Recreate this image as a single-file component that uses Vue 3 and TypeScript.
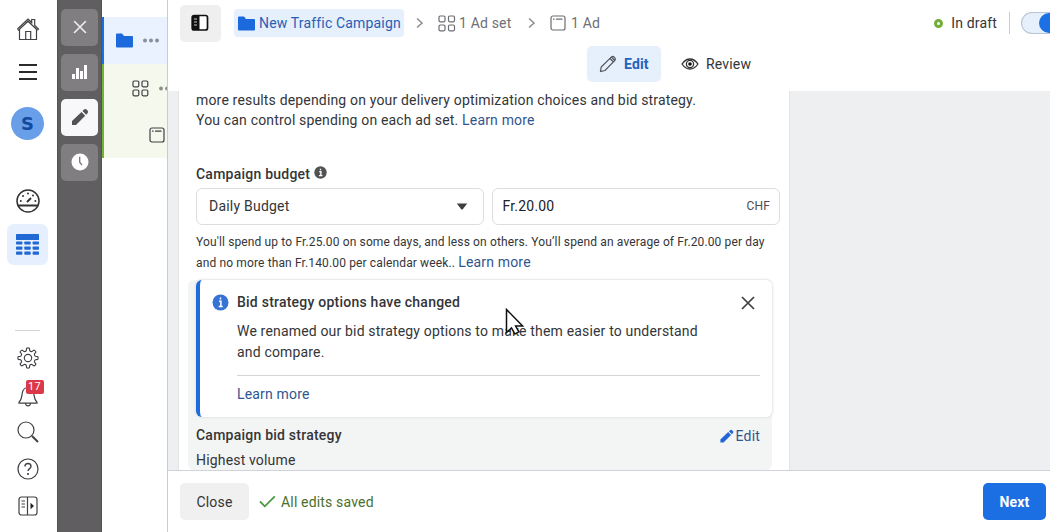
<script setup lang="ts">
interface Tool { name: string; active: boolean }

const tools: Tool[] = [
  { name: 'close', active: false },
  { name: 'chart', active: false },
  { name: 'pencil', active: true },
  { name: 'clock', active: false },
]
const gearTeeth: number[] = [0, 45, 90, 135, 180, 225, 270, 315]
const gearPath: string = gearTeeth
  .map((deg, i) => {
    const at = (r: number, d: number): string => {
      const a = ((deg + d) * Math.PI) / 180
      return `${(12 + r * Math.cos(a)).toFixed(2)} ${(12 + r * Math.sin(a)).toFixed(2)}`
    }
    return `${i ? 'L' : 'M'}${at(8.3, -13)}L${at(10.8, -8)}Q${at(11.4, 0)} ${at(10.8, 8)}L${at(8.3, 13)}Q${at(7.3, 22.5)} ${at(8.3, 32)}`
  })
  .join('') + 'Z'
</script>

<template>
  <div class="app">
    <nav class="rail">
      <div class="slot home">
        <svg width="24" height="24" viewBox="0 0 24 24" class="line"><path d="M1.500 12 12 2l3.700 3.500V2.500h3v6l3.800 3.500-1 1.200M1.500 12l1 1.200L12 4.200l9.500 9M3.500 12.500v10h17v-10M9.700 22.500v-8h5v8" /></svg>
      </div>
      <div class="slot menu">
        <svg width="20" height="18" viewBox="0 0 20 18"><path d="M1 2h18M1 9h18M1 16h18" stroke="#2b2b2b" stroke-width="2" fill="none" /></svg>
      </div>
      <div class="avatar">S</div>
      <div class="slot gauge">
        <svg width="24" height="24" viewBox="0 0 24 24" class="line gauge-icon"><circle cx="12" cy="12" r="11" /><path d="M2 16.500h20" stroke-width="2" /><path d="m11 13 4-4" stroke-width="2" /><g fill="#333" stroke="none"><circle cx="4.800" cy="12" r="1" /><circle cx="7" cy="7" r="1" /><circle cx="12" cy="4.500" r="1" /><circle cx="17" cy="6.500" r="1" /><circle cx="19.400" cy="12" r="1" /></g></svg>
      </div>
      <div class="table-tile">
        <svg width="23" height="21" viewBox="0 0 23 21" fill="#2068d4"><rect width="23" height="6" rx=".6" /><g v-for="row in 3" :key="row"><rect v-for="col in 3" :key="col" :x="(col - 1) * 8.3" :y="2.3 + row * 5.1" width="6.4" height="3.2" rx=".8" /></g></svg>
      </div>
      <div class="rail-divider"></div>
      <div class="slot gear">
        <svg width="22" height="22" viewBox="0 0 24 24" class="line"><path :d="gearPath" /><circle cx="12" cy="12" r="4" /></svg>
      </div>
      <div class="slot bell">
        <svg width="22" height="24" viewBox="0 0 22 24" class="line"><path d="M2 19.200c2.800-2.500 2.600-5 3.200-8.700C5.800 6.500 8 4.500 11 4.500s5.200 2 5.800 6c.6 3.700.4 6.200 3.200 8.700v1H2zM8.500 20.500c.5 3.200 4.500 3.200 5 0" /></svg>
        <span class="badge">17</span>
      </div>
      <div class="slot search">
        <svg width="22" height="22" viewBox="0 0 22 22" class="line"><circle cx="9" cy="9" r="8" /><path d="m15 15 6 6" stroke-width="2" /></svg>
      </div>
      <div class="slot help">
        <svg width="22" height="22" viewBox="0 0 22 22" class="line"><circle cx="11" cy="11" r="10" /><path d="M8 8.500c0-4 6-4 6 0 0 2-3 2.300-3 4.500" stroke-width="1.400" /><circle cx="11" cy="16" r=".5" /></svg>
      </div>
      <div class="slot sidebar">
        <svg width="20" height="20" viewBox="0 0 20 20" class="line"><rect x="1" y="1" width="18" height="18" rx="2.500" /><path d="M9.500 1v18M3.500 5h3.500M3.500 8h3.500M3.500 11h3.500" /><path d="m12.500 6.800 3.500 3.200-3.500 3.200z" fill="#222" stroke="none" /></svg>
      </div>
    </nav>

    <aside class="toolbar">
      <div v-for="tool in tools" :key="tool.name" class="tool" :class="{ active: tool.active }">
        <svg v-if="tool.name === 'close'" width="14" height="14" viewBox="0 0 14 14"><path d="m1.500 1.500 11 11m0-11-11 11" stroke="#eee" stroke-width="1.600" stroke-linecap="round" /></svg>
        <svg v-else-if="tool.name === 'chart'" width="16" height="16" viewBox="0 0 16 16" fill="#fff"><rect x="0" y="10" width="3" height="5" /><rect x="4" y="4" width="3" height="11" /><rect x="8" y="7" width="3" height="8" /><rect x="12" y="1" width="3" height="14" /></svg>
        <svg v-else-if="tool.name === 'pencil'" width="18" height="18" viewBox="0 0 18 18" fill="#545254"><path d="M1 17v-4L10.500 4l3.700 3.700L5 17zM11.500 3l1.500-1.500q1.500-1 2.800.300l.7.700q1.200 1.300.2 2.500l-1.500 1.700z" /></svg>
        <svg v-else width="18" height="18" viewBox="0 0 18 18"><circle cx="9" cy="9" r="8.500" fill="#fff" /><path d="M8.700 3.800v5.400l2.300 3" stroke="#777" stroke-width="1.300" fill="none" /></svg>
      </div>
    </aside>

    <aside class="tree">
      <div class="tree-row campaign">
        <svg width="17" height="15" viewBox="0 0 17 15" fill="#1b69dc"><path d="M0 1.500Q0 .5 1 .5h5l2 2.500h8q1 0 1 1v9.500q0 1-1 1H1q-1 0-1-1z" /></svg>
        <svg width="18" height="5" viewBox="0 0 18 5" fill="#888f9e"><circle cx="3" cy="2.500" r="2" /><circle cx="9" cy="2.500" r="2" /><circle cx="15" cy="2.500" r="2" /></svg>
      </div>
      <div class="tree-group">
        <div class="tree-row adset">
          <svg width="17" height="17" viewBox="0 0 17 17" class="line"><rect x="1" y="1" width="5.800" height="5.800" rx="1.200" /><rect x="10" y="1" width="5.800" height="5.800" rx="1.200" /><rect x="1" y="10" width="5.800" height="5.800" rx="1.200" /><rect x="10" y="10" width="5.800" height="5.800" rx="1.200" /></svg>
          <svg width="18" height="5" viewBox="0 0 18 5" fill="#888f86"><circle cx="3" cy="2.500" r="1.900" /><circle cx="9" cy="2.500" r="1.900" /></svg>
        </div>
        <div class="tree-row ad">
          <svg width="16" height="16" viewBox="0 0 16 16" class="line"><rect x="1" y="1" width="14" height="14" rx="2" /><path d="M3 4.200h1.500M6 4.200h6.500" /></svg>
        </div>
      </div>
    </aside>

    <main class="panel">
      <header class="header">
        <div class="crumbs">
          <button class="collapse">
            <svg width="18" height="18" viewBox="0 0 18 18"><rect x="1.200" y="1.500" width="15.300" height="14.500" rx="2" fill="#fff" stroke="#111" stroke-width="1.700" /><path d="M2 2h6.500v14H2z" fill="#111" /><path d="M3 5h3M3 8h3M3 11h3" stroke="#ccc" /></svg>
          </button>
          <div class="crumb-active">
            <svg width="17" height="15" viewBox="0 0 17 15" fill="#1b69dc"><path d="M0 1.500Q0 .5 1 .5h5l2 2.500h8q1 0 1 1v9.500q0 1-1 1H1q-1 0-1-1z" /></svg>
            <span>New Traffic Campaign</span>
          </div>
          <svg class="chev" width="8" height="12" viewBox="0 0 8 12"><path d="m1 1.500 5 4.500-5 4.500" /></svg>
          <svg width="18" height="17" viewBox="0 0 18 17" class="line soft"><rect x="1" y="1" width="6" height="5.800" rx="1.200" /><rect x="10.500" y="1" width="6" height="5.800" rx="1.200" /><rect x="1" y="10" width="6" height="5.800" rx="1.200" /><rect x="10.500" y="10" width="6" height="5.800" rx="1.200" /></svg>
          <span class="crumb adset-label">1 Ad set</span>
          <svg class="chev second" width="8" height="12" viewBox="0 0 8 12"><path d="m1 1.500 5 4.500-5 4.500" /></svg>
          <svg width="16" height="16" viewBox="0 0 16 16" class="line soft"><rect x="1" y="1" width="14" height="14" rx="2" /><path d="M3 4.200h1.500M6 4.200h6.500" /></svg>
          <span class="crumb ad-label">1 Ad</span>
          <div class="status">
            <i class="dot"></i><span>In draft</span><i class="bar"></i>
            <div class="toggle"><i></i></div>
          </div>
        </div>
        <div class="tabs">
          <button class="tab on">
            <svg width="18" height="18" viewBox="0 0 18 18" class="line pen"><path d="M1.500 16.500 2.200 12 12.500 1.900q1.300-1 2.500.1l.8.800q1.200 1.200.1 2.500L6 15.500zM11 3.500l3.500 3.500M12.500 2.200l3.300 3.300" /></svg>
            <span>Edit</span>
          </button>
          <button class="tab">
            <svg width="18" height="14" viewBox="0 0 18 14"><path d="M1 7q3.500-5 8-5t8 5q-3.500 5-8 5T1 7z" fill="#fff" stroke="#333" stroke-width="1.300" /><circle cx="9" cy="7" r="3.600" fill="#fff" stroke="#333" stroke-width="1.300" /><circle cx="9" cy="7" r="1.800" fill="#111" /></svg>
            <span>Review</span>
          </button>
        </div>
      </header>

      <section class="body">
        <div class="card">
          <p class="intro">more results depending on your delivery optimization choices and bid strategy.<br>You can control spending on each ad set. <a>Learn more</a></p>
          <div class="label">
            <span>Campaign budget</span>
            <svg width="13" height="13" viewBox="0 0 13 13"><circle cx="6.500" cy="6.500" r="6.200" fill="#515254" /><path d="M5.300 5.800h1.600v3.700M5 9.600h3.500M6.500 2.700v1.500" stroke="#fff" stroke-width="1.400" fill="none" /></svg>
          </div>
          <div class="fields">
            <div class="field select">
              <span>Daily Budget</span>
              <svg width="12" height="7" viewBox="0 0 12 7"><path d="M.8.500h10.400L7 6q-1 1-2 0z" fill="#3d3f42" /></svg>
            </div>
            <div class="field amount"><span>Fr.20.00</span><small>CHF</small></div>
          </div>
          <p class="hint">You'll spend up to Fr.25.00 on some days, and less on others. You’ll spend an average of Fr.20.00 per day<br>and no more than Fr.140.00 per calendar week.. <a>Learn more</a></p>

          <div class="strategy">
            <div class="notice">
              <svg class="info" width="17" height="17" viewBox="0 0 17 17"><circle cx="8.500" cy="8.500" r="8" fill="#3673d5" /><path d="M7 7.300h1.900v5M6.700 12.400h4M8.500 3.500v2" stroke="#fff" stroke-width="1.500" fill="none" /></svg>
              <div class="notice-main">
                <div class="notice-head">
                  <b>Bid strategy options have changed</b>
                  <svg width="14" height="14" viewBox="0 0 14 14"><path d="m1 1 12 12M13 1 1 13" stroke="#3f3f42" stroke-width="1.700" /></svg>
                </div>
                <p>We renamed our bid strategy options to make them easier to understand<br>and compare.</p>
                <div class="rule"></div>
                <a>Learn more</a>
              </div>
            </div>
            <div class="bid">
              <div><b>Campaign bid strategy</b><p>Highest volume</p></div>
              <a class="edit">
                <svg width="14" height="14" viewBox="0 0 18 18" fill="#1f67d8"><path d="M.5 17.500v-4L10.500 4l3.700 3.700L4.500 17.500zM11.500 3l1.500-1.500q1.500-1 2.800.300l.7.700q1.200 1.300.2 2.500l-1.500 1.700z" /></svg>
                <span>Edit</span>
              </a>
            </div>
          </div>
        </div>
      </section>

      <footer class="footer">
        <button class="close">Close</button>
        <svg width="17" height="13" viewBox="0 0 17 13"><path d="m1 6.500 4.800 4.800L15.800 1.300" stroke="#4c9a42" stroke-width="1.800" fill="none" /></svg>
        <span class="saved">All edits saved</span>
        <button class="next">Next</button>
      </footer>
    </main>

    <svg class="cursor" width="20" height="28" viewBox="0 0 20 28"><path d="M1.500 1.500v23l5-4.500 3.400 6 4-2.200-3.300-5.800h7z" fill="#fff" stroke="#111" stroke-width="1.500" /></svg>
  </div>
</template>

<style>
body { margin: 0; overflow: hidden; }
</style>

<style scoped>
* { box-sizing: border-box; }
p { margin: 0; }
svg { display: block; flex: none; }
button { border: 0; padding: 0; font: inherit; color: inherit; letter-spacing: inherit; }
a { color: #31568f; }
b { font-weight: 500; letter-spacing: .23px; }
.app { position: relative; display: flex; width: 1050px; height: 532px; overflow: hidden; background: #fff; color: #343538; font: 14px/20px Roboto, "Liberation Sans", sans-serif; letter-spacing: .17px; }
.line { fill: none; stroke: #3f4144; stroke-width: 1.2; }
.soft { stroke: #6b6d71; }
.pen { stroke: #505358; }

.rail { width: 57px; flex: none; display: flex; flex-direction: column; align-items: center; padding-right: 2px; }
.slot { height: 24px; display: flex; align-items: center; justify-content: center; }
.home { margin-top: 17px; }
.menu { margin-top: 19px; }
.avatar { width: 33px; height: 33px; margin-top: 23px; border-radius: 50%; background: #699fe9; color: #114b9f; text-align: center; font: 700 18px/33px "DejaVu Sans", sans-serif; letter-spacing: 0; }
.gauge { margin-top: 49px; }
.gauge-icon { stroke: #333; stroke-width: 1.5; }
.table-tile { width: 41px; height: 41px; margin-top: 11px; border-radius: 7px; background: #e5effd; display: grid; place-items: center; }
.rail-divider { width: 25px; height: 1px; background: #d4d5d8; margin-top: 65px; }
.gear { margin-top: 15px; }
.bell { position: relative; margin-top: 13px; }
.badge { position: absolute; left: 9px; top: -3px; width: 18px; height: 14px; background: #dc3848; border-radius: 2px; color: #fff; text-align: center; font-size: 11px; line-height: 14px; letter-spacing: .3px; }
.search { margin-top: 13px; }
.help { margin-top: 13px; }
.sidebar { margin-top: 13px; }

.toolbar { width: 45px; flex: none; display: flex; flex-direction: column; align-items: flex-start; gap: 8px; padding: 8.5px 0 0 3px; background: #605e60; border: solid #535153; border-width: 0 1px; }
.tool { width: 37px; height: 37px; border-radius: 5px; background: #807e80; display: grid; place-items: center; }
.tool.active { background: #f8f7fa; }

.tree { width: 65px; flex: none; padding-top: 17px; overflow: hidden; }
.tree-row { display: flex; align-items: center; height: 47px; overflow: hidden; }
.campaign { border-left: 2px solid #1c6dde; background: #e9f2fe; padding-left: 12px; gap: 9px; }
.tree-group { border-left: 2px solid #70b52d; background: #f4f8ed; height: 94px; }
.adset { padding: 1px 0 0 28px; gap: 9px; }
.ad { padding-left: 45px; }

.panel { flex: 1; min-width: 0; display: flex; flex-direction: column; border-left: 1px solid #c9cbd1; }
.header { height: 91px; flex: none; }
.crumbs { display: flex; align-items: center; height: 46px; padding-left: 12px; }
.collapse { width: 41px; height: 37px; border-radius: 5px; background: #efefef; display: grid; place-items: center; }
.collapse svg { margin-right: 1px; }
.crumb-active { display: flex; align-items: center; gap: 4px; width: 170px; height: 28px; margin-left: 13px; padding-left: 4px; background: #e6effc; border-radius: 4px; color: #2860b4; white-space: nowrap; }
.chev { fill: none; stroke: #8e9093; stroke-width: 1.6; margin: 0 14px 0 12px; }
.crumb { color: #6e7074; white-space: nowrap; }
.adset-label { width: 53px; margin-left: 3px; }
.chev.second { margin: 0 14px 0 16px; }
.ad-label { margin-left: 5px; }
.status { display: flex; align-items: center; margin-left: auto; }
.dot { width: 9px; height: 9px; border: 3px solid #73ad3a; border-radius: 50%; margin-right: 8px; }
.bar { width: 1px; height: 22px; background: #c8cacf; margin: 0 11px 0 12px; }
.toggle { width: 29px; height: 22px; border: 1px solid #b9c4d5; border-right: 0; border-radius: 11px 0 0 11px; background: #e6effc; overflow: hidden; display: flex; padding-left: 17px; }
.toggle i { width: 20px; height: 20px; border-radius: 50%; background: #1b70e4; flex: none; }
.tabs { display: flex; gap: 20px; padding-left: 419px; height: 36px; }
.tab { display: flex; align-items: center; gap: 7px; height: 36px; background: transparent; }
.tab.on { width: 74px; padding-left: 12px; border-radius: 5px; background: #e6effc; color: #2463bd; font-weight: 700; }

.body { flex: 1; min-height: 0; padding-left: 11px; background: #eeeff1; overflow: hidden; }
.card { width: 610px; height: 400px; padding: 0 8px 0 17px; background: #fff; box-shadow: 0 0 1px 1px #e4e5e8; margin-top: -1px; white-space: nowrap; }
.intro { line-height: 20px; }
.label { display: flex; align-items: center; height: 20px; margin-top: 34px; font-weight: 500; gap: 4px; letter-spacing: .23px; }
.label svg { margin-bottom: 4px; }
.fields { display: flex; gap: 8px; margin-top: 4px; }
.field { width: 288px; height: 37px; border: 1px solid #dcdde0; border-radius: 6px; display: flex; align-items: center; justify-content: space-between; background: #fff; }
.select { padding: 0 15px 1px 12px; letter-spacing: .22px; }
.amount { padding: 0 9px 1px 9.5px; color: #202124; letter-spacing: .2px; }
.amount small { font-size: 12px; color: #4a4c50; }
.hint { margin-top: 7px; font-size: 12px; line-height: 20px; letter-spacing: .135px; }
.hint a { font-size: 14px; letter-spacing: .17px; }
.strategy { width: 584px; margin: 7px 0 0 -8px; padding-left: 8px; height: 190px; background: #f3f4f4; border-radius: 6px; }
.notice { display: flex; width: 576px; height: 137px; padding: 12px 12px 0 12px; border-left: 4px solid #1f6bdc; border-radius: 6px; background: #fff; box-shadow: 0 0 2px 1px #e2e4e7; }
.info { margin: 2px 8px 0 0; }
.notice-main { flex: 1; }
.notice-head { display: flex; justify-content: space-between; height: 20px; }
.notice-head svg { margin: 4px 5px 0 0; }
.notice p { margin-top: 9px; line-height: 21px; }
.rule { height: 1px; margin: 12px 0 8px; background: #d2d4d8; }
.bid { display: flex; justify-content: space-between; padding: 8px 12px 0 0; }
.bid p { margin-top: 5px; }
.edit { display: flex; gap: 2px; height: 22px; align-items: center; }

.footer { height: 62px; flex: none; display: flex; align-items: center; padding: 0 4px 0 12px; border-top: 1px solid #d0d3d9; background: #fff; }
.close { width: 69px; height: 37px; border-radius: 5px; background: #f0f0f0; margin-right: 10px; }
.saved { margin-left: 5px; color: #496f2c; }
.next { width: 63px; height: 37px; margin-left: auto; border-radius: 5px; background: #1c6fe2; color: #fff; font-weight: 700; }
.cursor { position: absolute; left: 505px; top: 308px; }
</style>
